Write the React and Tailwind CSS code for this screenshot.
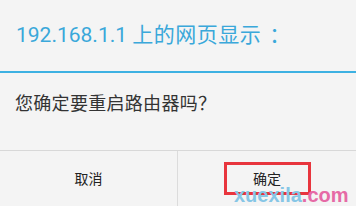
import React from "react";

const cjk = { fontFamily: '"Noto Sans CJK SC", Roboto, sans-serif' };
const digits = { fontFamily: 'Roboto, "Noto Sans CJK SC", sans-serif' };

export default function App() {
  return (
    <div
      className="relative w-[356px] h-[206px] overflow-hidden bg-[#f4f4f4] text-[#222]"
      style={cjk}
    >
      {/* title */}
      <div className="h-[71px] px-4 pt-[21px]">
        <h1 className="text-[21px] leading-[24px] text-[#3aa8da] whitespace-nowrap">
          <span style={digits}>192.168.1.1 </span>
          <span className="tracking-[0.5px]">上的网页显示</span>
          <span className="ml-[8px]">：</span>
        </h1>
      </div>
      <div className="h-[2px] bg-[#3db1e2]" />

      {/* message */}
      <div className="h-[77px] px-[15px] pt-[17px]">
        <p className="text-[18px] leading-[24px] tracking-[0.3px] text-[#333] whitespace-nowrap">
          您确定要重启路由器吗？
        </p>
      </div>

      {/* buttons */}
      <div className="flex h-[56px] border-t border-[#d8d8d8]">
        <button className="w-[178px] flex items-center justify-center text-[14px] text-[#222] border-r border-[#dcdcdc]">
          取消
        </button>
        <button className="flex-1 flex items-center justify-center text-[14px] text-[#222]">
          确定
        </button>
      </div>

      {/* highlight box */}
      <div className="absolute left-[224px] top-[162px] w-[87px] h-[33px] border-[3px] border-[#e8353d]" />

      {/* watermark */}
      <div
        className="absolute left-[234px] top-[183px] text-[20px] font-bold leading-[24px] whitespace-nowrap"
        style={{ fontFamily: '"Liberation Sans", Arial, sans-serif' }}
      >
        <span className="text-[#86c6e6]">xuexila</span>
        <span className="text-[#e66aa6]">.com</span>
      </div>
    </div>
  );
}
